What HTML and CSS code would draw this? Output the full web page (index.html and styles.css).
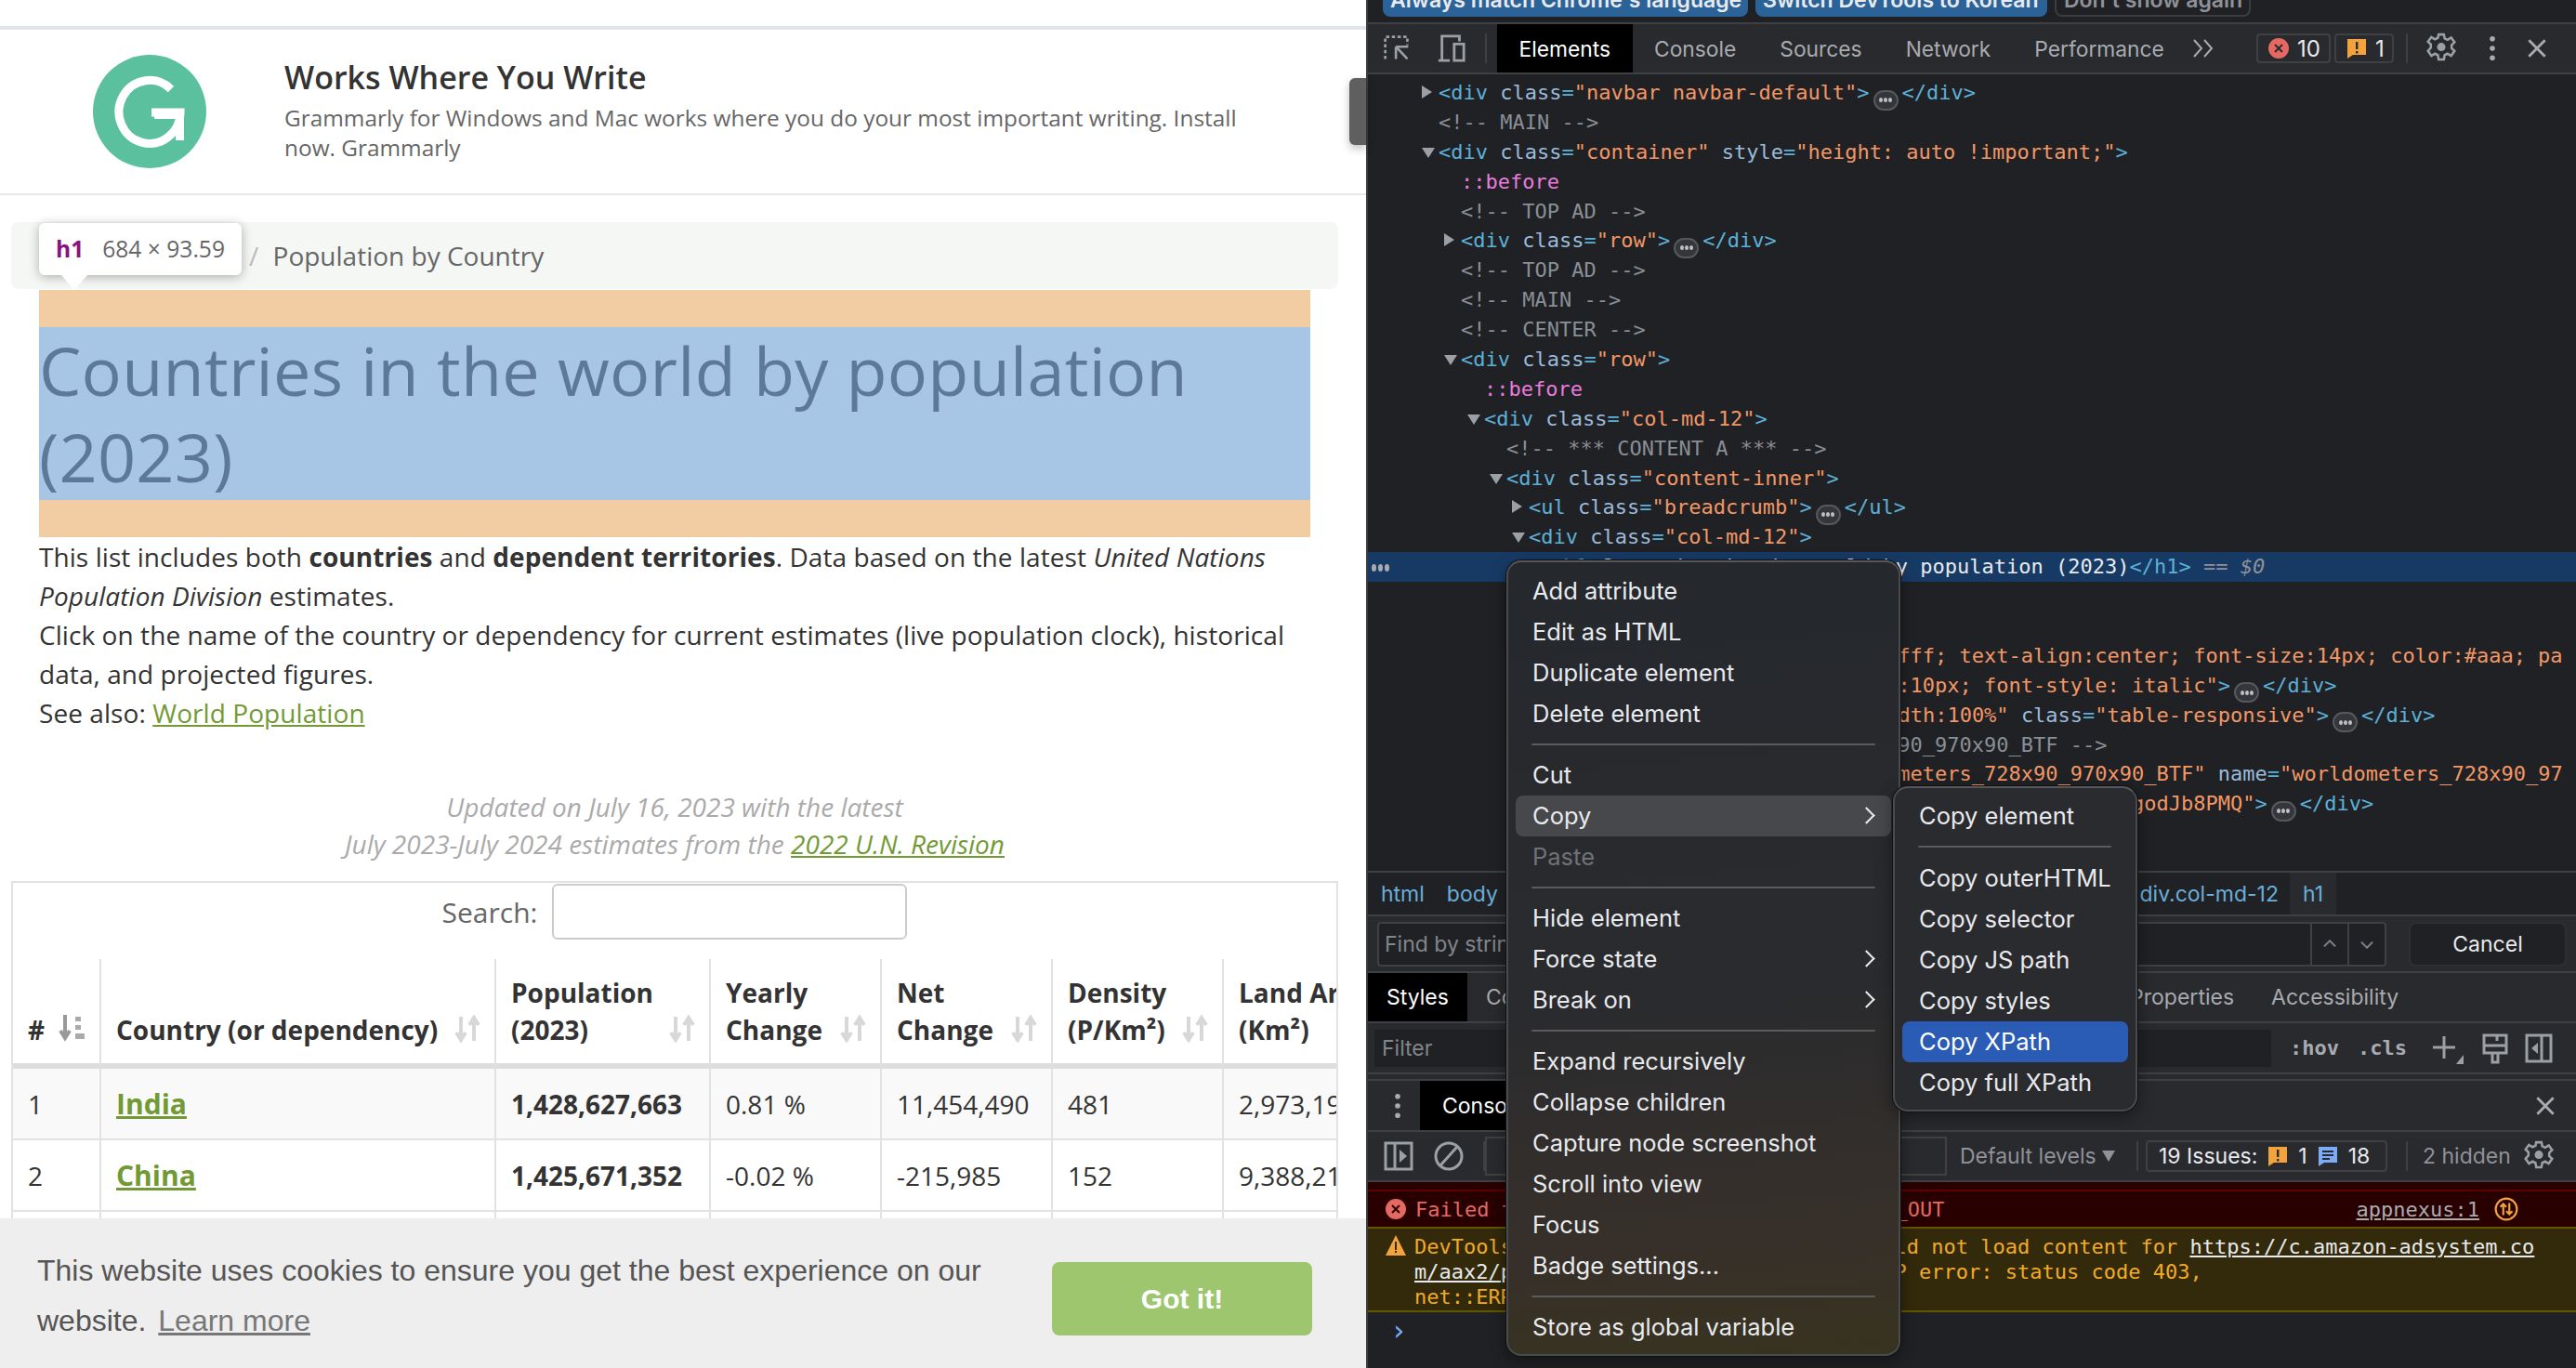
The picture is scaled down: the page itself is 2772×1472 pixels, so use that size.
FILE: index.html
```html
<!DOCTYPE html>
<html lang="en">
<head>
    <meta charset="UTF-8">
    <title>Countries in the world by population (2023)</title>
    <link rel="stylesheet" href="styles.css">
</head>
<body>
<div class="screen">
    <!-- left: the web page -->
    <div class="site">
        <div class="top-rule"></div>
        <div class="promo">
            <svg class="promo-logo" viewBox="0 0 122 122">
                <circle cx="61" cy="61" r="61" fill="#5bc09e"/>
                <path d="M84 37 A33 34 0 1 0 94 62 H63" fill="none" stroke="#fff" stroke-width="9"/>
                <path d="M66 60 H98 V92 H89 V69 H66 Z" fill="#fff"/>
            </svg>
            <div class="promo-text">
                <h3>Works Where You Write</h3>
                <p>Grammarly for Windows and Mac works where you do your most important writing. Install now. Grammarly</p>
            </div>
        </div>
        <div class="content">
            <div class="breadcrumb"><span class="crumb-sep">/</span> Population by Country</div>
            <div class="h1-margin"><h1>Countries in the world by population (2023)</h1></div>
            <p class="intro">This list includes both <b>countries</b> and <b>dependent territories</b>. Data based on the latest <i>United Nations Population Division</i> estimates.<br>Click on the name of the country or dependency for current estimates (live population clock), historical data, and projected figures.<br>See also: <a href="#">World Population</a></p>
            <p class="updated">Updated on July 16, 2023 with the latest<br>July 2023-July 2024 estimates from the <a href="#">2022 U.N. Revision</a></p>
            <div class="table-box">
                <div class="search"><label>Search:</label><input type="text"></div>
                <table>
                    <colgroup>
                        <col class="c-num"><col class="c-country"><col class="c-pop"><col class="c-std"><col class="c-std"><col class="c-std"><col class="c-land">
                    </colgroup>
                    <thead>
                        <tr>
                            <th>#
                                <svg class="sort" viewBox="0 0 30 30"><path d="M7 0v22M2 17l5 8 5-8" fill="none" stroke="#999" stroke-width="4"/><path d="M18 2h6v5h-6zM18 11h6v5h-6zM18 20h10v6H18z" fill="#aaa"/></svg></th>
                            <th>Country (or dependency)
                                <svg class="sort" viewBox="0 0 30 30"><use href="#updown"/></svg></th>
                            <th>Population<br>(2023)
                                <svg class="sort" viewBox="0 0 30 30"><use href="#updown"/></svg></th>
                            <th>Yearly<br>Change
                                <svg class="sort" viewBox="0 0 30 30"><use href="#updown"/></svg></th>
                            <th>Net<br>Change
                                <svg class="sort" viewBox="0 0 30 30"><use href="#updown"/></svg></th>
                            <th>Density<br>(P/Km²)
                                <svg class="sort" viewBox="0 0 30 30"><use href="#updown"/></svg></th>
                            <th>Land Area<br>(Km²)</th>
                        </tr>
                    </thead>
                    <tbody>
                        <tr class="odd">
                            <td>1</td><td><a href="#"><b>India</b></a></td><td><b>1,428,627,663</b></td><td>0.81 %</td><td>11,454,490</td><td>481</td><td>2,973,190</td>
                        </tr>
                        <tr>
                            <td>2</td><td><a href="#"><b>China</b></a></td><td><b>1,425,671,352</b></td><td>-0.02 %</td><td>-215,985</td><td>152</td><td>9,388,211</td>
                        </tr>
                        <tr>
                            <td></td><td></td><td></td><td></td><td></td><td></td><td></td>
                        </tr>
                    </tbody>
                </table>
            </div>
        </div>
        <div class="tooltip"><b>h1</b><span>684 × 93.59</span></div>
        <div class="cookie">
            <p>This website uses cookies to ensure you get the best experience on our website. <a href="#">Learn more</a></p>
            <button type="button">Got it!</button>
        </div>
    </div>

    <!-- right: devtools -->
    <div class="devtools">
        <span class="splitter"></span>
        <div class="infobar">
            <span class="info-btn blue b1">Always match Chrome's language</span>
            <span class="info-btn blue b2">Switch DevTools to Korean</span>
            <span class="info-btn b3">Don't show again</span>
        </div>
        <div class="bar main-tabs">
            <svg class="ico first" viewBox="0 0 34 34" fill="none" stroke="#9aa0a6" stroke-width="3"><path d="M3 30V3h27v10" stroke-dasharray="4 3"/><path d="M16 15v15M16 15h15M17 16l13 14" stroke-width="3"/></svg>
            <svg class="ico" viewBox="0 0 34 34" fill="none" stroke="#9aa0a6" stroke-width="3"><path d="M6 30V3h20v6M2 31h13M20 12h11v19H20z"/></svg>
            <i class="sep"></i>
            <span class="tab active">Elements</span>
            <span class="tab">Console</span>
            <span class="tab">Sources</span>
            <span class="tab">Network</span>
            <span class="tab">Performance</span>
            <svg class="more" viewBox="0 0 24 20" fill="none" stroke="#a8abb0" stroke-width="2"><path d="M2 1l8 9-8 9M13 1l8 9-8 9"/></svg>
            <span class="count-box err-box">
                <svg viewBox="0 0 24 24" class="badge"><circle cx="12" cy="12" r="11" fill="#e46962"/><path d="M8 8l8 8M16 8l-8 8" stroke="#2a2b2e" stroke-width="2"/></svg>10
            </span>
            <span class="count-box warn-box">
                <svg viewBox="0 0 24 24" class="badge"><path d="M2 2h20v17H8l-6 4z" fill="#f2a33c"/><path d="M11 5h2.4v8H11zM11 15h2.4v2.4H11z" fill="#2a2b2e"/></svg>1
            </span>
            <i class="sep"></i>
            <svg class="ico gear" viewBox="0 0 24 24"><use href="#gear"/></svg>
            <svg class="ico dots" viewBox="0 0 8 30"><circle cx="4" cy="4" r="3"/><circle cx="4" cy="15" r="3"/><circle cx="4" cy="26" r="3"/></svg>
            <svg class="ico close" viewBox="0 0 24 24"><path d="M4 4l16 16M20 4L4 20" stroke="#a8abb0" stroke-width="2.6"/></svg>
        </div>

        <div class="tree">
            <div class="row l0"><span class="tw-r"></span><span class="t">&lt;div</span> <span class="an">class</span><span class="t">=</span><span class="av">"navbar navbar-default"</span><span class="t">&gt;</span><span class="pill"><i></i><i></i><i></i></span><span class="t">&lt;/div&gt;</span></div>
            <div class="row l0"><span class="cm">&lt;!-- MAIN --&gt;</span></div>
            <div class="row l0"><span class="tw-d"></span><span class="t">&lt;div</span> <span class="an">class</span><span class="t">=</span><span class="av">"container"</span> <span class="an">style</span><span class="t">=</span><span class="av">"height: auto !important;"</span><span class="t">&gt;</span></div>
            <div class="row l1"><span class="ps">::before</span></div>
            <div class="row l1"><span class="cm">&lt;!-- TOP AD --&gt;</span></div>
            <div class="row l1"><span class="tw-r"></span><span class="t">&lt;div</span> <span class="an">class</span><span class="t">=</span><span class="av">"row"</span><span class="t">&gt;</span><span class="pill"><i></i><i></i><i></i></span><span class="t">&lt;/div&gt;</span></div>
            <div class="row l1"><span class="cm">&lt;!-- TOP AD --&gt;</span></div>
            <div class="row l1"><span class="cm">&lt;!-- MAIN --&gt;</span></div>
            <div class="row l1"><span class="cm">&lt;!-- CENTER --&gt;</span></div>
            <div class="row l1"><span class="tw-d"></span><span class="t">&lt;div</span> <span class="an">class</span><span class="t">=</span><span class="av">"row"</span><span class="t">&gt;</span></div>
            <div class="row l2"><span class="ps">::before</span></div>
            <div class="row l2"><span class="tw-d"></span><span class="t">&lt;div</span> <span class="an">class</span><span class="t">=</span><span class="av">"col-md-12"</span><span class="t">&gt;</span></div>
            <div class="row l3"><span class="cm">&lt;!-- *** CONTENT A *** --&gt;</span></div>
            <div class="row l3"><span class="tw-d"></span><span class="t">&lt;div</span> <span class="an">class</span><span class="t">=</span><span class="av">"content-inner"</span><span class="t">&gt;</span></div>
            <div class="row l4"><span class="tw-r"></span><span class="t">&lt;ul</span> <span class="an">class</span><span class="t">=</span><span class="av">"breadcrumb"</span><span class="t">&gt;</span><span class="pill"><i></i><i></i><i></i></span><span class="t">&lt;/ul&gt;</span></div>
            <div class="row l4"><span class="tw-d"></span><span class="t">&lt;div</span> <span class="an">class</span><span class="t">=</span><span class="av">"col-md-12"</span><span class="t">&gt;</span></div>
            <div class="row l5 selected"><span class="ell"><i></i><i></i><i></i></span><span class="t">&lt;h1&gt;</span><span class="w">Countries in the world by population (2023)</span><span class="t">&lt;/h1&gt;</span> <span class="eq">==</span> <span class="d0">$0</span></div>
            <div class="row l4"></div>
            <div class="row l4"></div>
            <div class="row l4"><span class="t">&lt;div</span> <span class="an">style</span><span class="t">=</span><span class="av">"background-color:#fff; text-align:center; font-size:14px; color:#aaa; pa</span></div>
            <div class="row l4"><span class="t">&lt;div</span> <span class="an">style</span><span class="t">=</span><span class="av">"color:#aaa; margin:10px; font-style: italic"</span><span class="t">&gt;</span><span class="pill"><i></i><i></i><i></i></span><span class="t">&lt;/div&gt;</span></div>
            <div class="row l4"><span class="t">&lt;div</span> <span class="an">id</span><span class="t">=</span><span class="av">"main_table"</span> <span class="an">style</span><span class="t">=</span><span class="av">"width:100%"</span> <span class="an">class</span><span class="t">=</span><span class="av">"table-responsive"</span><span class="t">&gt;</span><span class="pill"><i></i><i></i><i></i></span><span class="t">&lt;/div&gt;</span></div>
            <div class="row l4"><span class="cm">&lt;!-- Ad unit worldometers_728x90_970x90_BTF --&gt;</span></div>
            <div class="row l4"><span class="t">&lt;div</span> <span class="an">data-ad-unit-name</span><span class="t">=</span><span class="av">"worldometers_728x90_970x90_BTF"</span> <span class="an">name</span><span class="t">=</span><span class="av">"worldometers_728x90_97</span></div>
            <div class="row l4"><span class="t">&lt;div</span> <span class="an">class</span><span class="t">=</span><span class="av">"ad"</span> <span class="an">data-ad-client</span><span class="t">=</span><span class="av">"pub-1vPqRtZ8_l0XagodJb8PMQ"</span><span class="t">&gt;</span><span class="pill"><i></i><i></i><i></i></span><span class="t">&lt;/div&gt;</span></div>
        </div>

        <div class="crumbs">
            <span>html</span><span>body</span>
            <span class="crumb-r">div.col-md-12</span><span class="crumb-cur">h1</span>
        </div>
        <div class="find">
            <span class="find-input"><span class="find-ph">Find by string, selector, or XPath</span><span class="find-arrow">⌃</span><span class="find-arrow down">⌃</span></span>
            <span class="cancel">Cancel</span>
        </div>
        <div class="bar sub-tabs">
            <span class="tab active">Styles</span>
            <span class="tab">Computed</span>
            <span class="tab tab-prop">Properties</span>
            <span class="tab">Accessibility</span>
        </div>
        <div class="bar filter">
            <span class="filter-input">Filter</span>
            <span class="mono hov">:hov</span>
            <span class="mono cls">.cls</span>
            <svg class="ico tool t-plus" viewBox="0 0 34 34" fill="none" stroke="#9aa0a6" stroke-width="3"><path d="M13 4v24M1 16h24"/><path d="M34 34H26l8-10z" fill="#9aa0a6" stroke="none"/></svg>
            <svg class="ico tool t-paint" viewBox="0 0 34 34" fill="none" stroke="#9aa0a6" stroke-width="3"><path d="M5 3h24v19H5zM5 14h24M19 3v6M14 22h6v10h-6z"/></svg>
            <svg class="ico tool t-side" viewBox="0 0 34 34" fill="none" stroke="#9aa0a6" stroke-width="3"><path d="M4 3h26v28H4zM20 3v28"/><path d="M16 11v12l-7-6z" fill="#9aa0a6" stroke="none"/></svg>
        </div>
        <div class="drawer-gap"></div>
        <div class="bar drawer-tabs">
            <svg class="ico dots drawer-dots" viewBox="0 0 8 30"><circle cx="4" cy="4" r="3"/><circle cx="4" cy="15" r="3"/><circle cx="4" cy="26" r="3"/></svg>
            <span class="tab active">Console</span>
            <svg class="ico close" viewBox="0 0 24 24"><path d="M4 4l16 16M20 4L4 20" stroke="#a8abb0" stroke-width="2.6"/></svg>
        </div>
        <div class="bar console-bar">
            <svg class="ico first" viewBox="0 0 34 34" fill="none" stroke="#9aa0a6" stroke-width="3"><path d="M3 3h28v28H3zM13 3v28"/><path d="M18 10l8 7-8 7z" fill="#9aa0a6" stroke="none"/></svg>
            <svg class="ico" viewBox="0 0 34 34" fill="none" stroke="#9aa0a6" stroke-width="3"><circle cx="17" cy="17" r="14"/><path d="M8 27L26 7"/></svg>
            <i class="sep"></i>
            <span class="console-filter"></span>
            <span class="levels">Default levels<i class="caret"></i></span>
            <i class="sep"></i>
            <span class="issues">19 Issues:
                <svg viewBox="0 0 24 24" class="badge"><path d="M2 2h20v17H8l-6 4z" fill="#f2a33c"/><path d="M11 5h2.4v8H11zM11 15h2.4v2.4H11z" fill="#2a2b2e"/></svg>1
                <svg viewBox="0 0 24 24" class="badge"><path d="M2 2h20v17H8l-6 4z" fill="#7cacf8"/><path d="M6 6h12v2H6zM6 10h12v2H6zM6 14h8v2H6z" fill="#2a2b2e"/></svg>18
            </span>
            <i class="sep"></i>
            <span class="hidden-count">2 hidden</span>
            <svg class="ico gear" viewBox="0 0 24 24"><use href="#gear"/></svg>
        </div>
        <div class="log">
            <div class="log-err-top"></div>
            <div class="log-err">
                <svg viewBox="0 0 24 24" class="badge"><circle cx="12" cy="12" r="11" fill="#e46962"/><path d="M8 8l8 8M16 8l-8 8" stroke="#290000" stroke-width="2"/></svg>
                <span class="msg">Failed to load resource: net::ERR_TIMED_OUT</span>
                <a href="#">appnexus:1</a>
                <svg viewBox="0 0 24 24" class="replay" fill="none" stroke="#f2a33c" stroke-width="2"><circle cx="12" cy="12" r="10.5"/><path d="M9 7v11M6 10l3-3 3 3M15 17V6M12 14l3 3 3-3"/></svg>
            </div>
            <div class="log-warn">
                <svg viewBox="0 0 24 24" class="badge tri"><path d="M12 1l11 22H1z" fill="#f2a33c"/><path d="M11 8h2v9h-2zM11 18h2v2h-2z" fill="#332a0b"/></svg>
                <div class="msg">DevTools failed to load source map: Could not load content for <u>https://c.amazon-adsystem.co<br>m/aax2/pxj_bids1.js.map</u>: Load fail: HTTP error: status code 403,<br>net::ERR_HTTP_RESPONSE_CODE_FAILURE</div>
            </div>
            <div class="prompt">›</div>
        </div>

        <!-- right click menu sits over the panels -->
        <ul class="menu ctx">
            <li>Add attribute</li>
            <li>Edit as HTML</li>
            <li>Duplicate element</li>
            <li>Delete element</li>
            <li class="div"></li>
            <li>Cut</li>
            <li class="hover">Copy<em></em></li>
            <li class="off">Paste</li>
            <li class="div"></li>
            <li>Hide element</li>
            <li>Force state<em></em></li>
            <li>Break on<em></em></li>
            <li class="div"></li>
            <li>Expand recursively</li>
            <li>Collapse children</li>
            <li>Capture node screenshot</li>
            <li>Scroll into view</li>
            <li>Focus</li>
            <li>Badge settings...</li>
            <li class="div"></li>
            <li>Store as global variable</li>
        </ul>
        <ul class="menu sub">
            <li>Copy element</li>
            <li class="div"></li>
            <li>Copy outerHTML</li>
            <li>Copy selector</li>
            <li>Copy JS path</li>
            <li>Copy styles</li>
            <li class="pick">Copy XPath</li>
            <li>Copy full XPath</li>
        </ul>
    </div>
</div>

<svg width="0" height="0" class="defs">
    <symbol id="updown" viewBox="0 0 30 30">
        <path d="M8 2v23M3 19l5 8 5-8" fill="none" stroke="#d8d8d8" stroke-width="4"/>
        <path d="M22 28V5M17 11l5-8 5 8" fill="none" stroke="#d8d8d8" stroke-width="4"/>
    </symbol>
    <symbol id="gear" viewBox="0 0 24 24">
        <path d="M10 1.5h4l.6 3 2.2 1 2.7-1.6 2.6 3.4-2.2 2.2v2.4L22.1 14l-2.6 3.7-2.7-1.6-2.2 1-.6 3.4h-4l-.6-3.4-2.2-1-2.7 1.6L1.9 14l2.2-2.5V9.1L1.9 6.9l2.6-3.4 2.7 1.6 2.2-1z" fill="none" stroke="#9aa0a6" stroke-width="1.8"/>
        <circle cx="12" cy="11" r="3.2" fill="#9aa0a6"/>
    </symbol>
</svg>
</body>
</html>
```

FILE: styles.css
```css
* {
    box-sizing: border-box;
}

html, body {
    margin: 0;
    padding: 0;
    overflow: hidden;
}

.defs {
    position: absolute;
}

.screen {
    display: flex;
    width: 2772px;
    height: 1472px;
    overflow: hidden;
}

/* ---------- web page ---------- */
.site {
    position: relative;
    width: 1470px;
    flex: none;
    background: #fff;
    font-family: "Open Sans", sans-serif;
    color: #333;
    overflow: hidden;
}

.top-rule {
    margin-top: 28px;
    height: 4px;
    background: #e3e6e8;
}

.promo {
    display: flex;
    height: 178px;
    padding: 27px 0 0 100px;
    border-bottom: 2px solid #e8e8e8;
}

.promo-logo {
    width: 122px;
    height: 122px;
    flex: none;
}

.promo-text {
    margin-left: 84px;
    width: 1060px;
}

.promo-text h3 {
    margin: 2px 0 0;
    font-size: 34px;
    line-height: 44px;
    font-weight: 600;
    color: #333;
}

.promo-text p {
    margin: 6px 0 0;
    font-size: 24.4px;
    line-height: 32px;
    color: #666;
}

.content {
    padding: 29px 30px 0 12px;
}

.breadcrumb {
    height: 72px;
    padding: 15px 0 0 256px;
    background: #f5f7f5;
    border-radius: 8px;
    font-size: 28px;
    line-height: 42px;
    color: #666;
}

.crumb-sep {
    color: #bbb;
    margin-right: 8px;
}

.h1-margin {
    margin: 1px 30px 0 30px;
    padding: 40px 0;
    background: #f2cca2;
}

h1 {
    margin: 0;
    background: #a7c5e4;
    color: #5d7999;
    font-size: 72px;
    line-height: 93px;
    font-weight: 400;
    letter-spacing: 0.25px;
}

.intro {
    margin: 0 0 0 30px;
    font-size: 28px;
    line-height: 42px;
    letter-spacing: 0.07px;
    color: #333;
}

a {
    color: #729a34;
}

.updated {
    margin: 60px 0 0;
    text-align: center;
    font-size: 28px;
    line-height: 40px;
    font-style: italic;
    color: #aaa;
}

.table-box {
    margin-top: 20px;
    height: 520px;
    border: 2px solid #e2e2e2;
    border-bottom: 0;
    overflow: hidden;
}

.search {
    display: flex;
    justify-content: center;
    align-items: center;
    height: 62px;
    gap: 16px;
    font-size: 30px;
    color: #666;
}

.search input {
    width: 382px;
    height: 60px;
    border: 2px solid #ccc;
    border-radius: 6px;
    background: #fff;
}

table {
    margin-top: 20px;
    table-layout: fixed;
    border-collapse: separate;
    border-spacing: 0;
    width: 1520px;
    font-size: 28px;
}

.c-num { width: 93px; }
.c-country { width: 425px; }
.c-pop { width: 231px; }
.c-std { width: 184px; }
.c-land { width: 219px; }

th {
    position: relative;
    height: 118px;
    padding: 0 16px 16px;
    text-align: left;
    vertical-align: bottom;
    font-size: 28px;
    line-height: 40px;
    font-weight: 700;
    color: #333;
    border-left: 2px solid #e2e2e2;
    border-bottom: 6px solid #ddd;
    white-space: nowrap;
}

th:first-child {
    border-left: 0;
}

.sort {
    position: absolute;
    right: 14px;
    bottom: 22px;
    width: 30px;
    height: 30px;
}

td {
    height: 77px;
    padding: 0 16px;
    border-left: 2px solid #e2e2e2;
    border-bottom: 2px solid #e2e2e2;
    white-space: nowrap;
    overflow: hidden;
    color: #333;
}

td:first-child {
    border-left: 0;
}

.odd td {
    background: #f9f9f9;
}

td a {
    font-size: 30px;
    text-decoration-thickness: 3px;
}

.tooltip {
    position: absolute;
    left: 42px;
    top: 240px;
    display: flex;
    gap: 20px;
    align-items: center;
    width: 218px;
    height: 56px;
    padding: 0 0 2px 18px;
    background: #fff;
    border-radius: 6px;
    box-shadow: 0 2px 12px rgba(0, 0, 0, 0.3);
    font-size: 24.6px;
    color: #666;
    white-space: nowrap;
}

.tooltip b {
    color: #881280;
}

.tooltip::after {
    content: "";
    position: absolute;
    left: 24px;
    top: 56px;
    border-left: 14px solid transparent;
    border-right: 14px solid transparent;
    border-top: 16px solid #fff;
}

.cookie {
    position: absolute;
    left: 0;
    right: 0;
    top: 1311px;
    height: 161px;
    display: flex;
    align-items: center;
    padding: 4px 58px 0 40px;
    background: #eee;
    font-family: "Liberation Sans", Arial, sans-serif;
    font-size: 32px;
    line-height: 54px;
    color: #555;
}

.cookie p {
    margin: 0;
    width: 1040px;
}

.cookie a {
    color: #777;
    margin-left: 4px;
}

.cookie button {
    margin: 8px 0 0 auto;
    width: 280px;
    height: 79px;
    border: 0;
    border-radius: 8px;
    background: #9dc66f;
    color: #fff;
    font: bold 30px "Liberation Sans", Arial, sans-serif;
}

/* ---------- devtools ---------- */
.devtools {
    position: relative;
    flex: 1;
    min-width: 0;
    background: #202124;
    font-family: Inter, "Noto Sans", sans-serif;
    font-size: 23px;
    color: #bdc1c6;
    border-left: 2px solid #3c3d40;
}

.splitter {
    position: absolute;
    left: -20px;
    top: 84px;
    width: 18px;
    height: 72px;
    background: #5f5f5f;
    border-radius: 6px 0 0 6px;
    box-shadow: 0 4px 10px rgba(0, 0, 0, 0.25);
}

.infobar {
    display: flex;
    height: 26px;
    padding-left: 16px;
    gap: 8px;
    background: #202124;
    border-bottom: 2px solid #3f4043;
    overflow: hidden;
}

.info-btn {
    display: block;
    height: 18px;
    padding: 0 8px;
    margin-top: 0;
    line-height: 0;
    font-size: 23px;
    font-weight: 600;
    white-space: nowrap;
    border-radius: 0 0 8px 8px;
    color: #8f9298;
    border: 2px solid #3c3d40;
    border-top: 0;
    overflow: hidden;
}

.info-btn.blue {
    background: #2b6399;
    border: 0;
    color: #e8eaed;
}

.b1 { width: 393px; }
.b2 { width: 314px; }
.b3 { width: 211px; }

.bar {
    display: flex;
    align-items: center;
    background: #292a2d;
    border-bottom: 2px solid #3f4043;
}

.main-tabs {
    height: 54px;
    padding-right: 29px;
}

.ico {
    flex: none;
    width: 34px;
    height: 34px;
}

.main-tabs .first {
    margin-left: 16px;
    width: 30px;
}

.main-tabs .first + .ico {
    margin-left: 28px;
    width: 32px;
}

.sep {
    flex: none;
    width: 2px;
    height: 32px;
    background: #3f4043;
}

.main-tabs > .sep:nth-of-type(1) {
    margin-left: 20px;
}

.tab {
    display: flex;
    align-items: center;
    align-self: stretch;
    padding: 0 24px;
    white-space: nowrap;
    color: #a8abb0;
}

.tab.active {
    background: #000;
    color: #fff;
}

.main-tabs .tab {
    padding: 0 23.5px;
    font-size: 22.8px;
}

.main-tabs .tab.active {
    margin-left: 11px;
}

.more {
    flex: none;
    width: 24px;
    height: 20px;
    margin-left: 7px;
}

.count-box {
    display: flex;
    align-items: center;
    gap: 8px;
    height: 32px;
    padding: 0 0 0 10px;
    border: 2px solid #3f4043;
    border-radius: 4px;
    color: #e8eaed;
    font-size: 24px;
}

.err-box {
    margin-left: auto;
    width: 80px;
}

.warn-box {
    margin-left: 4px;
    width: 64px;
}

.main-tabs .warn-box + .sep {
    margin-left: 13px;
}

.badge {
    width: 24px;
    height: 24px;
    flex: none;
}

.main-tabs .gear {
    margin-left: 19px;
}

.main-tabs .dots {
    margin-left: 34px;
}

.dots {
    width: 8px;
    height: 28px;
    fill: #a8abb0;
}

.close {
    margin-left: 31px;
    width: 26px;
    height: 26px;
}

.tree {
    height: 857px;
    padding-top: 4px;
    overflow: hidden;
    font-family: "DejaVu Sans Mono", monospace;
    font-size: 22px;
    color: #9aa0a6;
}

.row {
    position: relative;
    height: 31.9px;
    line-height: 31.9px;
    white-space: nowrap;
}

.l0 { padding-left: 76px; }
.l1 { padding-left: 100px; }
.l2 { padding-left: 125px; }
.l3 { padding-left: 149px; }
.l4 { padding-left: 173px; }
.l5 { padding-left: 197px; }

.t { color: #5db0d7; }
.an { color: #9bbbdc; }
.av { color: #f29766; }
.cm { color: #898f96; }
.ps { color: #e87bdc; }
.w { color: #e8eaed; }
.eq { color: #8f9298; }
.d0 { color: #8f9298; font-style: italic; }

.tw-r,
.tw-d {
    display: inline-block;
    width: 0;
    height: 0;
    margin-left: -18px;
    vertical-align: 1px;
}

.tw-r {
    border-top: 7px solid transparent;
    border-bottom: 7px solid transparent;
    border-left: 11px solid #9aa0a6;
    margin-right: 7px;
}

.tw-d {
    border-left: 7px solid transparent;
    border-right: 7px solid transparent;
    border-top: 11px solid #9aa0a6;
    margin-right: 4px;
}

.pill {
    display: inline-flex;
    justify-content: center;
    align-items: center;
    gap: 1px;
    width: 27px;
    height: 22px;
    margin: 0 4px;
    vertical-align: -3px;
    border: 2px solid #55585d;
    border-radius: 11px;
    background: #35363a;
}

.pill i,
.ell i {
    width: 4px;
    height: 5px;
    border-radius: 50%;
    background: #bdc1c6;
}

.selected {
    background: #173a65;
}

.ell {
    position: absolute;
    left: 4px;
    top: 13px;
    display: flex;
    gap: 2px;
}

.ell i {
    width: 5px;
    height: 8px;
    background: #a8abb0;
}

.crumbs {
    display: flex;
    align-items: center;
    height: 49px;
    padding-left: 14px;
    gap: 24px;
    border-top: 2px solid #3f4043;
    border-bottom: 2px solid #3f4043;
    color: #6aaedb;
}

.crumb-r {
    margin-left: auto;
    margin-right: -24px;
}

.crumb-cur {
    display: flex;
    align-items: center;
    align-self: stretch;
    padding: 0 14px;
    margin-left: 12px;
    margin-right: 258px;
    background: #292a2d;
}

.find {
    display: flex;
    align-items: center;
    height: 61px;
    padding: 0 10px;
    background: #292a2d;
    border-bottom: 2px solid #3f4043;
}

.find-input {
    display: flex;
    align-items: center;
    width: 1086px;
    height: 48px;
    padding-left: 6px;
    background: #202124;
    border: 2px solid #3f4043;
    border-radius: 4px;
    color: #80868b;
}

.find-ph {
    flex: 1;
}

.find-arrow {
    width: 40px;
    height: 46px;
    line-height: 54px;
    text-align: center;
    border-left: 2px solid #3f4043;
}

.find-arrow.down {
    transform: scaleY(-1);
}

.cancel {
    margin-left: auto;
    width: 170px;
    height: 48px;
    line-height: 44px;
    text-align: center;
    background: #202124;
    border: 2px solid #2e2f32;
    border-radius: 8px;
    color: #e8eaed;
}

.sub-tabs {
    height: 54px;
}

.sub-tabs .tab {
    padding: 0 20px;
}

.tab-prop {
    margin-left: 540px;
}

.filter {
    height: 55px;
    padding-left: 7px;
}

.filter-input {
    width: 965px;
    height: 40px;
    padding-left: 8px;
    line-height: 40px;
    background: #202124;
    color: #80868b;
}

.mono {
    font-family: "DejaVu Sans Mono", monospace;
    font-size: 22px;
    font-weight: 700;
    color: #a8abb0;
}

.hov {
    margin-left: 20px;
}

.cls {
    margin-left: 20px;
}

.t-plus {
    margin-left: 27px;
}

.t-paint {
    margin-left: 17px;
}

.t-side {
    margin-left: 13px;
}

.drawer-gap {
    height: 7px;
    background: #292a2d;
    border-bottom: 2px solid #3f4043;
}

.drawer-tabs {
    height: 55px;
}

.drawer-dots {
    margin-left: 28px;
    margin-right: 20px;
}

.drawer-tabs .close {
    margin-left: auto;
    margin-right: 20px;
}

.console-bar {
    height: 54px;
}

.console-bar .first {
    margin-left: 16px;
}

.console-bar .first + .ico {
    margin-left: 20px;
}

.console-bar .sep {
    margin-left: 20px;
}

.console-filter {
    width: 497px;
    height: 42px;
    border: 2px solid #3f4043;
}

.levels {
    display: flex;
    align-items: center;
    width: 170px;
    margin-left: 14px;
    color: #8f9298;
}

.caret {
    margin-left: 6px;
    border-left: 7px solid transparent;
    border-right: 7px solid transparent;
    border-top: 12px solid #8f9298;
}

.issues {
    display: flex;
    align-items: center;
    gap: 10px;
    height: 34px;
    margin-left: 8px;
    padding: 0 0 0 12px;
    width: 260px;
    border: 2px solid #3f4043;
    border-radius: 4px;
    color: #e8eaed;
    white-space: nowrap;
}

.hidden-count {
    margin-left: 16px;
    color: #8f9298;
    white-space: nowrap;
}

.console-bar .gear {
    margin-left: 13px;
}

.log {
    font-family: "DejaVu Sans Mono", monospace;
    font-size: 22px;
}

.log-err-top {
    height: 10px;
    background: #290000;
    border-bottom: 2px solid #5c0000;
}

.log-err {
    display: flex;
    align-items: center;
    height: 38px;
    padding: 0 62px 0 18px;
    background: #290000;
    color: #e46962;
}

.log-err .msg {
    margin-left: 9px;
}

.log-err a {
    margin-left: auto;
    color: #a8abb0;
}

.replay {
    flex: none;
    width: 26px;
    height: 26px;
    margin-left: 16px;
}

.log-warn {
    display: flex;
    height: 92px;
    padding: 6px 0 0 18px;
    background: #332a0b;
    border-top: 2px solid #650;
    border-bottom: 2px solid #650;
    color: #f2ab26;
    line-height: 27px;
    white-space: nowrap;
}

.log-warn .msg {
    margin-left: 8px;
}

.log-warn u {
    color: #e8eaed;
}

.prompt {
    padding: 2px 0 0 24px;
    font-size: 30px;
    color: #7cacf8;
}

.menu {
    position: absolute;
    margin: 0;
    list-style: none;
    border: 2px solid #4a4b4e;
    border-top-color: #56575a;
    border-radius: 16px;
    font-size: 25.5px;
    color: #e8eaed;
    box-shadow: 0 0 0 1px #111, 0 6px 18px rgba(0, 0, 0, 0.4);
}

.menu li {
    position: relative;
    height: 44px;
    line-height: 44px;
    white-space: nowrap;
    padding-left: 18px;
    margin: 0 8px;
    border-radius: 8px;
}

.menu .div {
    height: 2px;
    margin: 10px 25px 10px 25px;
    padding: 0;
    background: #5a5b5e;
}

.ctx {
    left: 149px;
    top: 603px;
    width: 424px;
    height: 856px;
    padding: 9px 0 0;
    background: linear-gradient(175deg, #25282d 0%, #2a2b2e 55%, #37302a 85%, #37331f 100%);
}

.sub {
    left: 565px;
    top: 846px;
    width: 263px;
    height: 350px;
    padding: 8px 0 0;
    background: #2a2b2e;
}

.menu .off {
    color: #6f7276;
}

.menu .hover {
    background: #47484b;
}

.menu .pick {
    background: #2a5bb5;
    color: #fff;
}

.sub .div {
    margin: 10px 26px 11px 25px;
}

.menu em {
    position: absolute;
    right: 20px;
    top: 15px;
    width: 13px;
    height: 13px;
    border-top: 2px solid #e8eaed;
    border-right: 2px solid #e8eaed;
    transform: rotate(45deg);
}
```
